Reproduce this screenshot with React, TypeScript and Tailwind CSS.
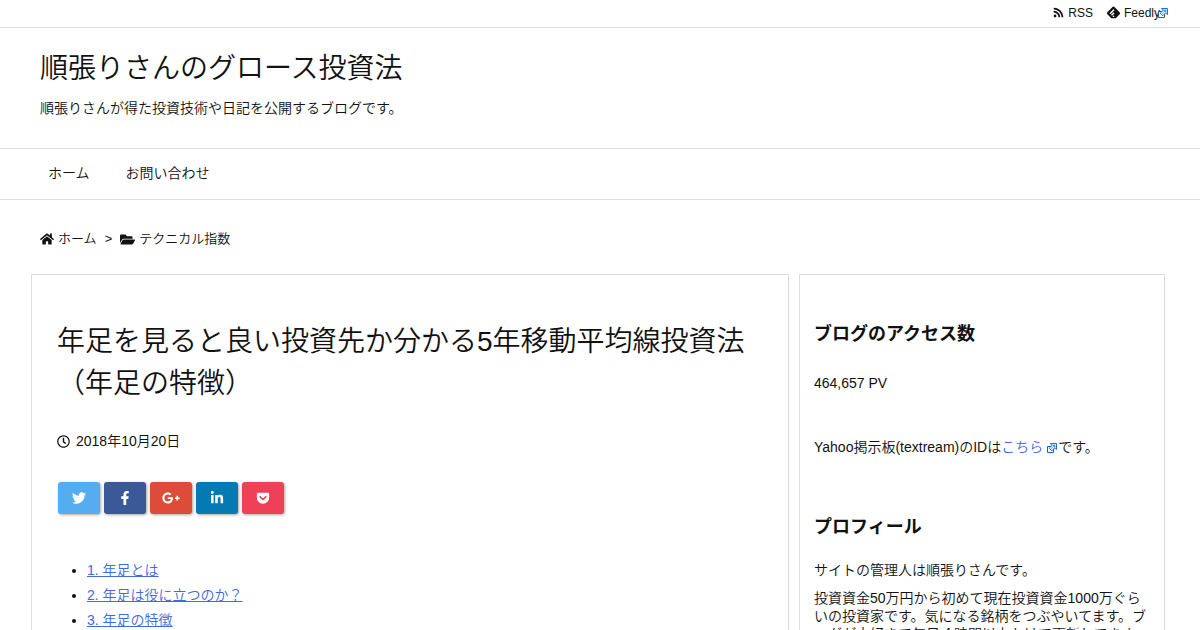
import type { ReactNode } from 'react';
import {
  FaFacebookF,
  FaFolderOpen,
  FaGetPocket,
  FaGooglePlusG,
  FaHome,
  FaLinkedinIn,
  FaRegClock,
  FaRss,
  FaTwitter
} from 'react-icons/fa';
import { SiFeedly } from 'react-icons/si';

const shares = [
  { name: 'Twitter', icon: <FaTwitter />, color: 'bg-[#55acee]' },
  { name: 'Facebook', icon: <FaFacebookF />, color: 'bg-[#3b5998]' },
  { name: 'Google+', icon: <FaGooglePlusG className="text-lg" />, color: 'bg-[#dd4b39]' },
  { name: 'LinkedIn', icon: <FaLinkedinIn />, color: 'bg-[#0479b4]' },
  { name: 'Pocket', icon: <FaGetPocket />, color: 'bg-[#ee4056]' }
];

const toc = ['1. 年足とは', '2. 年足は役に立つのか？', '3. 年足の特徴'];

function ExternalIcon({ className = '' }: { className?: string }) {
  return (
    <svg viewBox="0 0 10 10" width="10" height="10" className={`inline-block ${className}`} aria-hidden="true">
      <path d="M.5 3.5h6v6h-6z" fill="#fff" stroke="#06c" />
      <path d="M3.5 .5h6v6L7.5 5 4.8 7.8 2.2 5.2 5 2.5z" fill="#e8f4ff" stroke="#1171dd" />
      <path d="M5.5 2H8v2.5zM7.5 2.5 4 6" fill="#1a8cff" stroke="#3c9dff" strokeWidth=".6" />
    </svg>
  );
}

function WidgetTitle({ children }: { children: ReactNode }) {
  return <h3 className="text-[18px] leading-[26px] font-bold">{children}</h3>;
}

export default function App() {
  return (
    <div className="h-screen overflow-hidden bg-white font-['Liberation_Sans','Noto_Sans_CJK_JP',sans-serif] text-[14px] leading-[18px] font-[350] text-[#111]">
      <div className="flex h-7 items-center justify-end gap-3.5 border-b border-[#ddd] pr-8 pb-0.5 text-[12px]">
        <a href="#rss" className="flex items-center gap-1">
          <FaRss className="text-[11px]" />
          RSS
        </a>
        <a href="#feedly" className="flex items-center">
          <SiFeedly className="mr-1 text-[13px]" />
          Feedly
          <ExternalIcon className="-ml-0.5" />
        </a>
      </div>

      <header className="px-10 pt-5 pb-[31px]">
        <h1 className="text-[28px] leading-[42px]">
          <a href="#top">順張りさんのグロース投資法</a>
        </h1>
        <p className="mt-[9px]">順張りさんが得た投資技術や日記を公開するブログです。</p>
      </header>

      <nav className="flex gap-9 border-y border-[#ddd] px-12 pt-[15px] pb-[17px]">
        <a href="#home">ホーム</a>
        <a href="#contact">お問い合わせ</a>
      </nav>

      <div className="flex items-center px-10 pt-[30px] pb-[26px] text-[13px]">
        <a href="#home" className="flex items-center gap-1">
          <FaHome className="text-[14px]" />
          ホーム
        </a>
        <span className="mx-2">&gt;</span>
        <a href="#technical" className="flex items-center gap-1">
          <FaFolderOpen className="text-[15px]" />
          テクニカル指数
        </a>
      </div>

      <div className="flex gap-2.5 pr-[35px] pl-[31px]">
        <main className="min-w-0 flex-1 border border-[#ddd] px-[25px] pt-[46px] pb-10">
          <h2 className="text-[28px] leading-[42px]">
            年足を見ると良い投資先か分かる5年移動平均線投資法（年足の特徴）
          </h2>
          <p className="mt-[27px] flex items-center gap-1.5">
            <FaRegClock className="text-[13px]" />
            2018年10月20日
          </p>
          <div className="mt-8 ml-px flex gap-1">
            {shares.map((s) => (
              <button
                key={s.name}
                aria-label={s.name}
                className={`flex h-8 w-[42px] items-center justify-center rounded-[3px] text-white shadow-[1px_1px_3px_rgba(0,0,0,0.35)] ${s.color}`}
              >
                {s.icon}
              </button>
            ))}
          </div>
          <ul className="mt-11 list-disc pl-[30px] leading-[25px]">
            {toc.map((t) => (
              <li key={t}>
                <a href="#toc" className="text-[#4169e1] underline">
                  {t}
                </a>
              </li>
            ))}
          </ul>
        </main>

        <aside className="w-[366px] shrink-0 border border-[#ddd] px-3.5 pt-[46px] pb-10">
          <WidgetTitle>ブログのアクセス数</WidgetTitle>
          <p className="mt-[27px]">464,657 PV</p>
          <p className="mt-[46px] mb-[58px]">
            Yahoo掲示板(textream)のIDは
            <a href="#textream" className="text-[#4169e1]">
              こちら
              <ExternalIcon className="mr-px ml-1 align-[-1px]" />
            </a>
            です。
          </p>
          <WidgetTitle>プロフィール</WidgetTitle>
          <p className="mt-[21px]">サイトの管理人は順張りさんです。</p>
          <p className="mt-2.5">
            投資資金50万円から初めて現在投資資金1000万ぐらいの投資家です。気になる銘柄をつぶやいてます。ブログが大好きで毎日４時間以上かけて更新してます。
          </p>
        </aside>
      </div>
    </div>
  );
}
